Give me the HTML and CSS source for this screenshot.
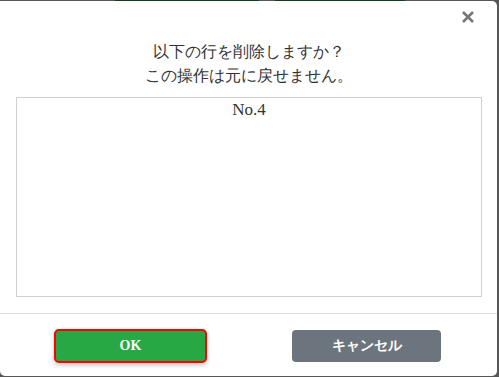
FILE: index.html
```html
<!DOCTYPE html>
<html lang="ja">
<head>
  <meta charset="UTF-8" />
  <title>削除確認</title>
  <link rel="stylesheet" href="styles.css">
</head>
<body>
  <div class="backdrop-strip">
    <span class="strip-gap first"></span>
    <span class="strip-btn wide"></span>
    <span class="strip-gap"></span>
    <span class="strip-btn"></span>
  </div>
  <div class="modal">
    <div class="modal-header">
      <button class="close" aria-label="close">
        <svg width="12" height="12" viewBox="0 0 12 12">
          <path d="M1 1 L11 11 M11 1 L1 11" stroke="#777" stroke-width="2.6" stroke-linecap="butt" />
        </svg>
      </button>
    </div>
    <div class="modal-body">
      <p class="message">以下の行を削除しますか？<br>この操作は元に戻せません。</p>
      <div class="row-list">
        <div class="row-item">No.4</div>
      </div>
    </div>
    <div class="modal-footer">
      <button class="btn btn-ok">OK</button>
      <button class="btn btn-cancel">キャンセル</button>
    </div>
  </div>
</body>
</html>
```

FILE: styles.css
```css
html, body {
  margin: 0;
  padding: 0;
  width: 499px;
  height: 377px;
  overflow: hidden;
  background: #575757;
  font-family: "Liberation Serif", serif;
}
.backdrop-strip {
  display: flex;
  height: 1px;
}
.strip-gap {
  width: 16px;
}
.strip-gap.first {
  width: 115px;
}
.strip-btn {
  width: 130px;
  background: #0f3f1d;
}
.strip-btn.wide {
  width: 144px;
}
.modal {
  width: 497px;
  height: 375px;
  background: #fff;
  border-radius: 0 5px 5px 5px;
  display: flex;
  flex-direction: column;
  box-sizing: border-box;
}
.modal-header {
  height: 39px;
  display: flex;
  justify-content: flex-end;
  align-items: flex-start;
  padding: 10px 23px 0 0;
  box-sizing: border-box;
}
.close {
  border: none;
  background: none;
  padding: 0;
  width: 12px;
  height: 12px;
  display: flex;
  cursor: pointer;
}
.modal-body {
  padding: 0 15px 16px 16px;
  border-bottom: 1px solid #dedede;
}
.message {
  margin: 0 0 9px;
  text-align: center;
  font-size: 16px;
  line-height: 24px;
  color: #333;
}
.row-list {
  height: 200px;
  border: 1px solid #cfcfcf;
  box-sizing: border-box;
}
.row-item {
  text-align: center;
  font-size: 17px;
  line-height: 24px;
  color: #333;
}
.modal-footer {
  display: flex;
  justify-content: space-between;
  align-items: center;
  padding: 15px 56px 0 54px;
}
.btn {
  border: none;
  border-radius: 4px;
  color: #fff;
  font-family: "Liberation Serif", serif;
  font-size: 14px;
  font-weight: bold;
  cursor: pointer;
}
.btn-ok {
  width: 153px;
  height: 34px;
  background: #28a745;
  border: 2px solid #f00;
  border-radius: 5px;
  box-shadow: 0 2px 4px rgba(0, 0, 0, 0.25);
}
.btn-cancel {
  width: 149px;
  height: 32px;
  background: #6c757d;
}
```
